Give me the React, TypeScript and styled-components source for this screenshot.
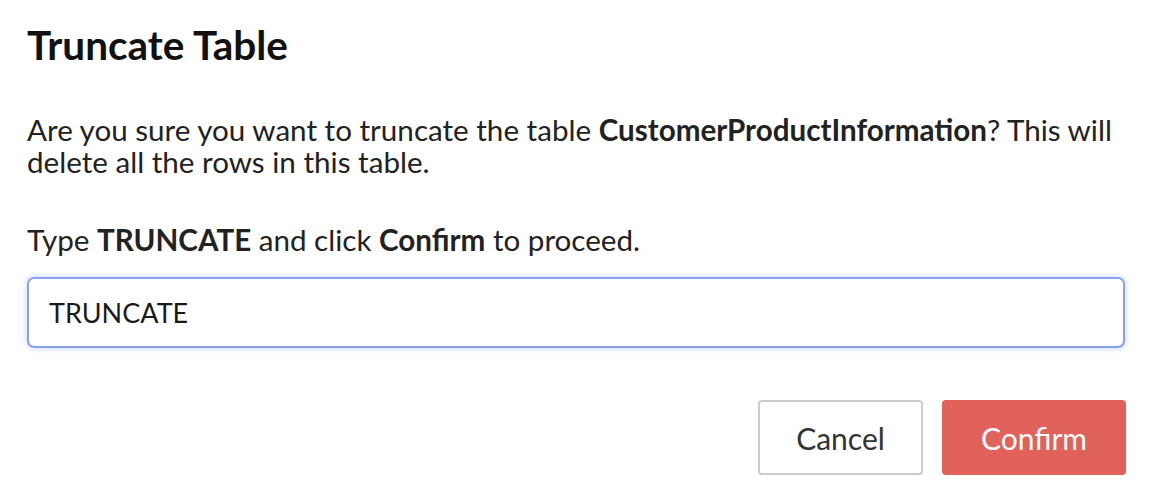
import styled, { createGlobalStyle } from "styled-components";

const GlobalStyle = createGlobalStyle`
  html, body {
    margin: 0;
    padding: 0;
    background: #ffffff;
  }
  body {
    font-family: Lato, "Open Sans", sans-serif;
    color: #222222;
  }
`;

export default function App() {
  return (
    <>
      <GlobalStyle />
      <Dialog>
        <Title>Truncate Table</Title>
        <Text>
          Are you sure you want to truncate the table <b>CustomerProductInformation</b>? This will
          delete all the rows in this table.
        </Text>
        <Prompt>
          Type <b>TRUNCATE</b> and click <b>Confirm</b> to proceed.
        </Prompt>
        <Input defaultValue="TRUNCATE" />
        <Footer>
          <Button>Cancel</Button>
          <Button $primary>Confirm</Button>
        </Footer>
      </Dialog>
    </>
  );
}

const Dialog = styled.div`
  width: 1150px;
  height: 493px;
  box-sizing: border-box;
  padding: 20px 24px 0 27px;
  display: flex;
  flex-direction: column;
`;

const Title = styled.h2`
  margin: 0;
  font-size: 40.5px;
  line-height: 50px;
  font-weight: 700;
  color: #111111;
`;

const Text = styled.p`
  margin: 44px 0 0;
  width: 1100px;
  font-size: 29.6px;
  line-height: 32px;
  color: #222222;

  b {
    font-weight: 700;
  }
`;

const Prompt = styled(Text)`
  margin-top: 46px;
`;

const Input = styled.input`
  margin-top: 21px;
  height: 71px;
  width: 1098px;
  box-sizing: border-box;
  border: 2px solid #88a3ec;
  border-radius: 7px;
  box-shadow: 0 0 6px rgba(120, 150, 240, 0.45);
  padding: 0 20px;
  font-family: Lato, "Open Sans", sans-serif;
  font-size: 27px;
  color: #1a1a1a;
  outline: none;
`;

const Footer = styled.div`
  margin-top: 52px;
  display: flex;
  justify-content: flex-end;
  gap: 19px;
  width: 1099px;
`;

const Button = styled.button<{ $primary?: boolean }>`
  height: 75px;
  padding: 0;
  box-sizing: border-box;
  border-radius: 4px;
  font-family: Lato, "Open Sans", sans-serif;
  font-size: 30px;
  cursor: pointer;
  border: 2px solid ${(p) => (p.$primary ? "#e0625a" : "#cccccc")};
  background: ${(p) => (p.$primary ? "#e0625a" : "#ffffff")};
  color: ${(p) => (p.$primary ? "#ffffff" : "#333333")};
  width: ${(p) => (p.$primary ? "184px" : "165px")};
`;
